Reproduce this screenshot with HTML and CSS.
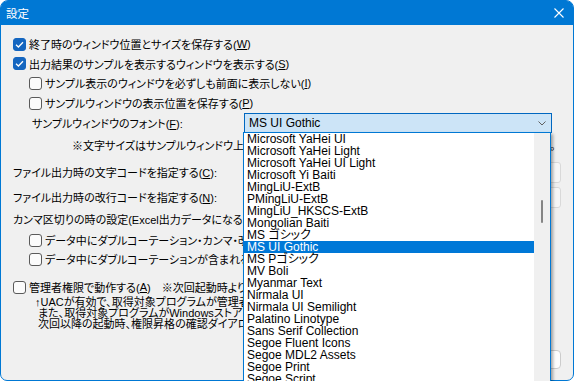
FILE: index.html
```html
<!DOCTYPE html>
<html lang="ja">
<head>
    <meta charset="UTF-8">
    <title>設定</title>
    <link rel="stylesheet" href="styles.css">
</head>
<body>
    <div class="window">
        <div class="titlebar">
            <span class="title">設定</span>
            <svg class="close" width="10" height="10" viewBox="0 0 10 10">
                <path d="M0.5 0.5 L9.5 9.5 M9.5 0.5 L0.5 9.5" stroke="#fff" stroke-width="1.1" fill="none"/>
            </svg>
        </div>

        <div class="content">
            <label class="row r1">
                <span class="cb on"><svg viewBox="0 0 13 13"><path d="M3 6.8 L5.4 9 L10 4.2" stroke="#fff" stroke-width="1.3" fill="none"/></svg></span>
                終了時のウィンドウ位置とサイズを保存する(<u>W</u>)
            </label>
            <label class="row r2">
                <span class="cb on"><svg viewBox="0 0 13 13"><path d="M3 6.8 L5.4 9 L10 4.2" stroke="#fff" stroke-width="1.3" fill="none"/></svg></span>
                出力結果のサンプルを表示するウィンドウを表示する(<u>S</u>)
            </label>
            <label class="row r3 sub">
                <span class="cb"></span>
                サンプル表示のウィンドウを必ずしも前面に表示しない(<u>I</u>)
            </label>
            <label class="row r4 sub">
                <span class="cb"></span>
                サンプルウィンドウの表示位置を保存する(<u>P</u>)
            </label>
            <div class="row r5">
                <span class="font-label">サンプルウィンドウのフォント(<u>F</u>):</span>
                <div class="combo open">
                    <span>MS UI Gothic</span>
                    <svg width="8" height="5" viewBox="0 0 8 5"><path d="M0.5 0.5 L4 4 L7.5 0.5" stroke="#606060" fill="none"/></svg>
                </div>
            </div>
            <div class="row r6">
                <span class="note">※文字サイズはサンプルウィンドウ上でCtrlキーを押しながらマウスホイールで変更できます</span><span class="stop">。</span>
            </div>
            <div class="row r7">
                <span>ファイル出力時の文字コードを指定する(<u>C</u>):</span>
                <div class="combo small"></div>
            </div>
            <div class="row r8">
                <span>ファイル出力時の改行コードを指定する(<u>N</u>):</span>
                <div class="combo small"></div>
            </div>
            <div class="row r9">
                <span>カンマ区切りの時の設定(Excel出力データになるように)</span>
            </div>
            <label class="row r10 sub">
                <span class="cb"></span>
                データ中にダブルコーテーション・カンマ・改行がある時は囲む
            </label>
            <label class="row r11 sub">
                <span class="cb"></span>
                データ中にダブルコーテーションが含まれる場合は二重にする
            </label>
            <label class="row r12">
                <span class="cb"></span>
                管理者権限で動作する(<u>A</u>)　※次回起動時より有効
            </label>
            <div class="notes">
                <p>↑UACが有効で、取得対象プログラムが管理者権限で動作している場合</p>
                <p class="cont">また、取得対象プログラムがWindowsストアアプリの場合</p>
                <p class="cont">次回以降の起動時、権限昇格の確認ダイアログが出ます</p>
            </div>
            <div class="footer">
                <button>OK</button>
                <button>キャンセル</button>
            </div>
        </div>
    </div>

    <div class="droplist">
        <ul class="items">
            <li>Microsoft YaHei UI</li>
            <li>Microsoft YaHei Light</li>
            <li>Microsoft YaHei UI Light</li>
            <li>Microsoft Yi Baiti</li>
            <li>MingLiU-ExtB</li>
            <li>PMingLiU-ExtB</li>
            <li>MingLiU_HKSCS-ExtB</li>
            <li>Mongolian Baiti</li>
            <li>MS ゴシック</li>
            <li class="selected">MS UI Gothic</li>
            <li>MS Pゴシック</li>
            <li>MV Boli</li>
            <li>Myanmar Text</li>
            <li>Nirmala UI</li>
            <li>Nirmala UI Semilight</li>
            <li>Palatino Linotype</li>
            <li>Sans Serif Collection</li>
            <li>Segoe Fluent Icons</li>
            <li>Segoe MDL2 Assets</li>
            <li>Segoe Print</li>
            <li>Segoe Script</li>
        </ul>
        <div class="scrollbar"><div class="thumb"></div></div>
    </div>
</body>
</html>
```

FILE: styles.css
```css
html, body {
    margin: 0;
    padding: 0;
    overflow: hidden;
    background: #fff;
}

body {
    font-family: "Liberation Sans", "Noto Sans CJK JP", sans-serif;
    font-size: 11px;
    font-feature-settings: "palt";
    color: #000;
    position: relative;
    width: 574px;
    height: 381px;
}

.window {
    box-sizing: border-box;
    width: 574px;
    height: 381px;
    border: 1px solid #0078d4;
    border-radius: 8px 8px 7px 7px;
    background: #f0f0f0;
}

.titlebar {
    height: 24px;
    background: #0078d4;
    color: #fff;
    display: flex;
    align-items: center;
    justify-content: space-between;
    padding: 0 9px 0 5px;
    border-radius: 6px 6px 0 0;
}

.title {
    font-size: 11.5px;
}

.content {
    padding: 9px 12px 0 11px;
}

.row {
    display: flex;
    align-items: center;
    height: 20px;
    white-space: nowrap;
    padding-left: 1px;
}

.row.sub {
    padding-left: 17px;
}

.r2 { height: 19px; }
.r5 { height: 20px; }
.r6 { height: 18px; margin-top: 3px; }
.r7 { height: 22px; margin-top: 7px; justify-content: space-between; }
.r8 { height: 22px; margin-top: 3px; justify-content: space-between; }
.r9 { height: 18px; margin-top: 2px; }
.r10 { height: 18px; margin-top: 3px; }
.r11 { height: 18px; margin-top: 1px; }
.r12 { height: 18px; margin-top: 10px; }

u {
    text-decoration: underline;
    text-underline-offset: 1px;
}

.cb {
    box-sizing: border-box;
    width: 13px;
    height: 13px;
    margin-right: 3px;
    border: 1px solid #5a5a5a;
    border-radius: 3px;
    background: #fbfbfb;
    display: inline-flex;
    flex-shrink: 0;
}

.cb.on {
    background: #1466c0;
    border-color: #1466c0;
}

.cb svg {
    width: 13px;
    height: 13px;
    margin: -1px;
}

.font-label {
    padding-left: 19px;
    width: 212px;
}

.combo {
    box-sizing: border-box;
    height: 20px;
    display: flex;
    align-items: center;
    justify-content: space-between;
    border: 1px solid #d9d9d9;
    background: #f7f7f7;
    border-radius: 3px;
}

.combo.open {
    width: 308px;
    padding: 0 5px 0 4px;
    font-size: 12px;
    background: #cce4f7;
    border-color: #0067c0;
    border-radius: 0;
}

.combo.small {
    width: 180px;
    height: 21px;
}

.note {
    margin-left: 59px;
    width: 481px;
    overflow: hidden;
}

.stop {
    font-feature-settings: normal;
}

.notes {
    margin-top: 1px;
    line-height: 11px;
}

.notes p {
    margin: 0;
    padding-left: 23px;
    white-space: nowrap;
}

.notes p.cont {
    padding-left: 26px;
}

.footer {
    display: flex;
    justify-content: flex-end;
    gap: 8px;
    margin-top: 20px;
}

.footer button {
    font-family: inherit;
    font-size: 11px;
    width: 75px;
    height: 19px;
    border: 1px solid #cccccc;
    border-radius: 4px;
    background: #fdfdfd;
    padding: 0;
}

.droplist {
    position: absolute;
    left: 243px;
    top: 132px;
    width: 308px;
    height: 262px;
    box-sizing: border-box;
    border: 1px solid #0078d4;
    background: #fff;
    display: flex;
    font-size: 12px;
    box-shadow: 2px 2px 3px rgba(0, 0, 0, 0.35);
}

.items {
    list-style: none;
    margin: 0;
    padding: 0;
    flex: 1;
}

.items li {
    height: 12px;
    line-height: 12px;
    padding-left: 3px;
    white-space: nowrap;
}

.items li.selected {
    background: #0078d7;
    color: #fff;
}

.scrollbar {
    width: 16px;
    background: #f0f0f0;
    position: relative;
}

.thumb {
    position: absolute;
    left: 7px;
    top: 67px;
    width: 2px;
    height: 23px;
    background: #858585;
    border-radius: 1px;
}
```
